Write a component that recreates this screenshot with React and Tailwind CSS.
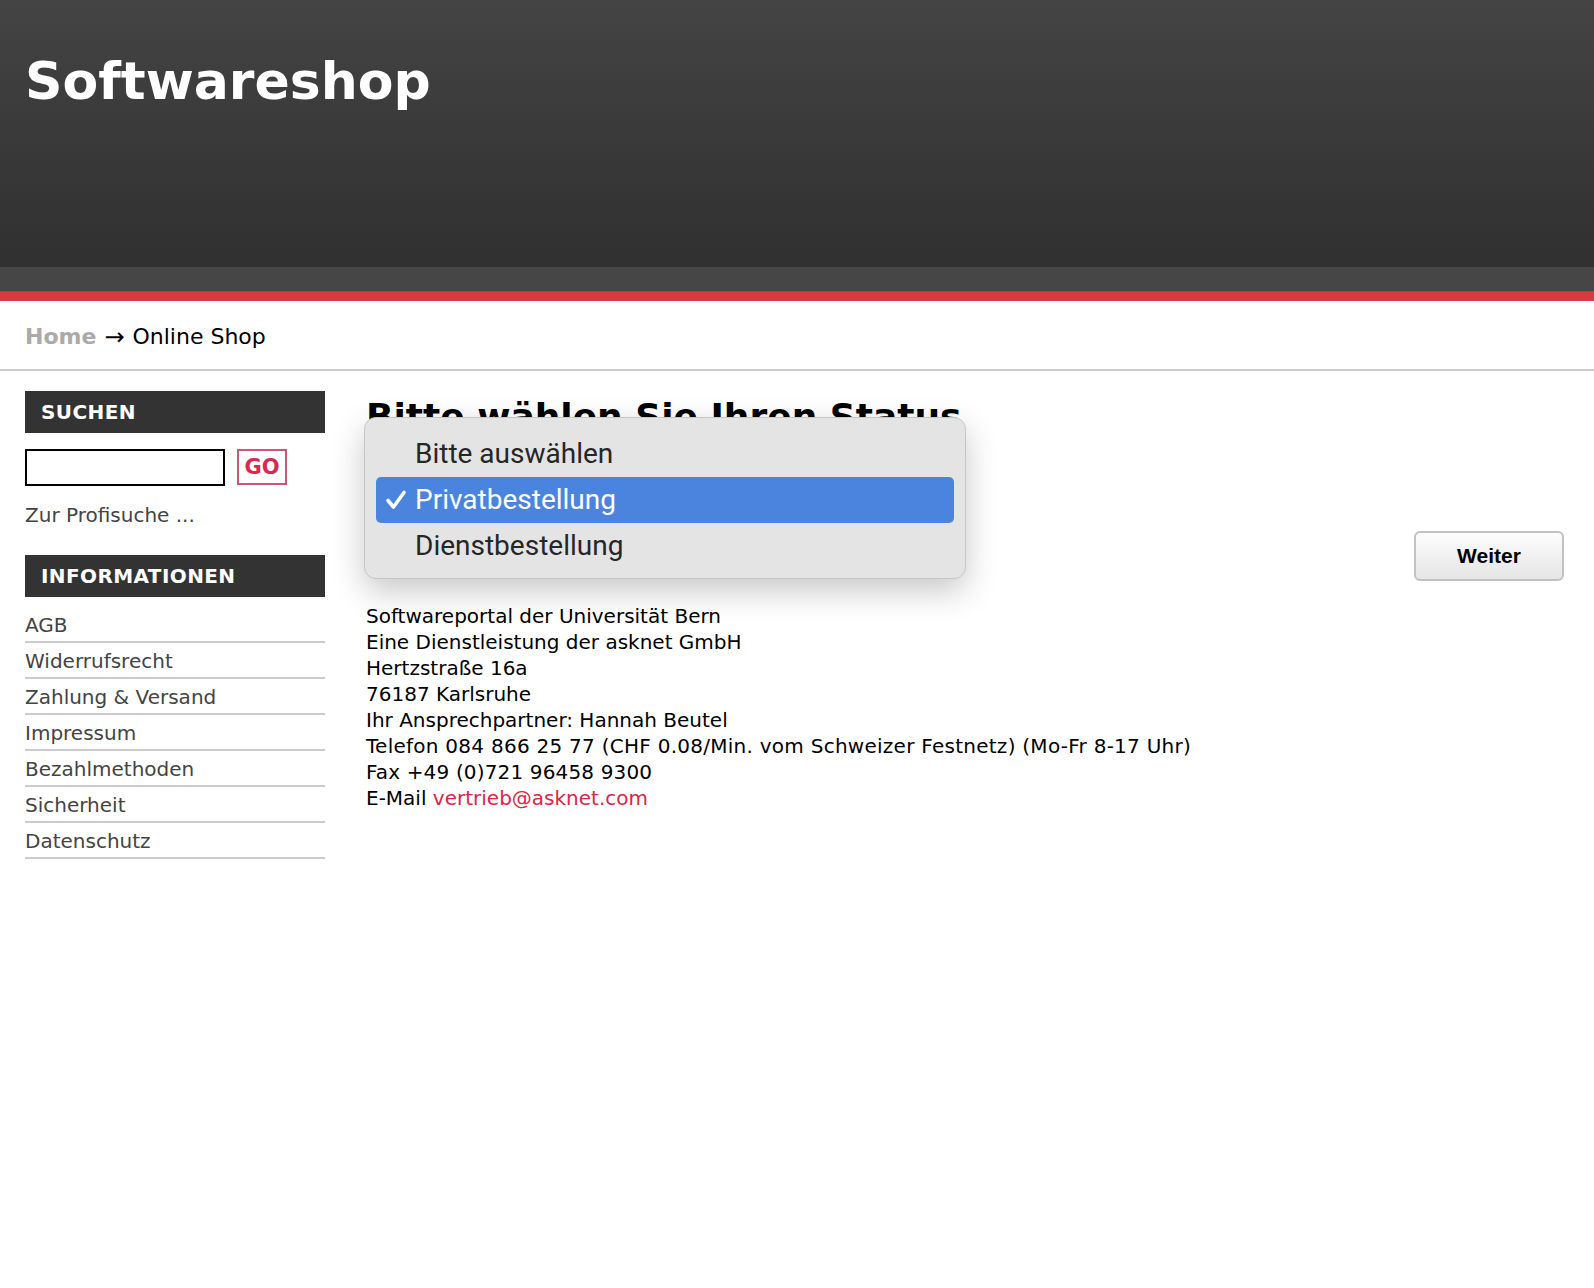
import React from "react";

const infoLinks = [
  "AGB",
  "Widerrufsrecht",
  "Zahlung & Versand",
  "Impressum",
  "Bezahlmethoden",
  "Sicherheit",
  "Datenschutz",
];

const addressLines = [
  "Softwareportal der Universität Bern",
  "Eine Dienstleistung der asknet GmbH",
  "Hertzstraße 16a",
  "76187 Karlsruhe",
  "Ihr Ansprechpartner: Hannah Beutel",
];

function SideHeader({ children }) {
  return (
    <div className="h-[42px] bg-[#333333] px-[16px] flex items-center text-white text-[20px] font-bold uppercase tracking-[0.4px]">
      {children}
    </div>
  );
}

// native-looking macOS popup of the status select
function StatusPopup() {
  const options = ["Bitte auswählen", "Privatbestellung", "Dienstbestellung"];
  return (
    <div className="absolute left-[-3px] top-[-62px] w-[602px] rounded-[12px] border border-[#c6c6c6] bg-[#e4e4e4] pt-[13px] pb-[9px] px-[11px] shadow-[0_12px_32px_rgba(0,0,0,0.22)] font-['Roboto','Liberation_Sans',sans-serif]">
      {options.map((o, i) => {
        const active = i === 1;
        return (
          <div
            key={o}
            className={
              active
                ? "h-[46px] rounded-[5px] bg-[#4a84de] text-white flex items-center"
                : "h-[46px] text-[#262626] flex items-center"
            }
          >
            <span className="w-[39px] flex justify-center pl-[1px]">
              {active && (
                <svg width="22" height="22" viewBox="0 0 22 22">
                  <path d="M3 11.5 L8.5 18 L19 3.5" fill="none" stroke="white" strokeWidth="3.6" strokeLinecap="round" strokeLinejoin="round" />
                </svg>
              )}
            </span>
            <span className="text-[28px] leading-none">{o}</span>
          </div>
        );
      })}
    </div>
  );
}

export default function App() {
  return (
    <div className="min-h-screen bg-white font-['DejaVu_Sans','Verdana',sans-serif] text-black">
      {/* header */}
      <div className="h-[267px] bg-gradient-to-b from-[#444444] to-[#303030] pl-[25px] pt-[55px]">
        <h1 className="text-[52px] leading-none font-bold text-white">Softwareshop</h1>
      </div>
      <div className="h-[24px] bg-[#464646]" />
      <div className="h-[10px] bg-[#db3941] border-t border-[#c23a40]" />

      {/* breadcrumb */}
      <div className="h-[70px] border-b-2 border-[#cccccc] px-[25px] pt-[3px] flex items-center text-[22px]">
        <span className="font-bold text-[#aaaaaa]">Home</span>
        <span className="ml-[8px] text-[24px] leading-none">→</span>
        <span className="ml-[8px]">Online Shop</span>
      </div>

      <div className="flex pt-[20px] pl-[25px] pr-[30px]">
        {/* sidebar */}
        <aside className="w-[300px] shrink-0 text-[20px]">
          <SideHeader>Suchen</SideHeader>
          <div className="mt-[16px] flex items-start gap-[12px]">
            <input className="w-[200px] h-[37px] border-2 border-black outline-none" />
            <button className="w-[50px] h-[36px] border-2 border-[#c65a72] text-[#d62a52] font-bold text-[21px] leading-none flex items-center justify-center">
              GO
            </button>
          </div>
          <div className="mt-[17px] leading-[24px] text-[#444444]">Zur Profisuche ...</div>
          <div className="mt-[28px]">
            <SideHeader>Informationen</SideHeader>
          </div>
          <ul className="mt-[10px]">
            {infoLinks.map((l) => (
              <li
                key={l}
                className="h-[36px] pt-[6px] leading-[24px] border-b-2 border-[#cccccc] text-[#444444]"
              >
                {l}
              </li>
            ))}
          </ul>
        </aside>

        {/* main content */}
        <main className="flex-1 ml-[41px] pt-[4px]">
          <h2 className="text-[36px] leading-[43px] font-bold">Bitte wählen Sie Ihren Status</h2>
          <div className="relative mt-[40px] w-[599px] h-[37px] rounded-[6px] border border-[#555555] bg-white">
            <StatusPopup />
          </div>
          <div className="mt-[16px] flex justify-end">
            <button className="w-[150px] h-[50px] rounded-[6px] border-2 border-[#c2c2c2] bg-gradient-to-b from-[#fdfdfd] to-[#e5e5e5] font-['Liberation_Sans',Arial,sans-serif] font-bold text-[21px]">
              Weiter
            </button>
          </div>
          <div className="mt-[22px] text-[20px] leading-[26px]">
            {addressLines.map((a) => (
              <div key={a}>{a}</div>
            ))}
            <div className="tracking-[0.26px]">
              Telefon 084 866 25 77 (CHF 0.08/Min. vom Schweizer Festnetz) (Mo-Fr 8-17 Uhr)
            </div>
            <div className="tracking-[0.15px]">Fax +49 (0)721 96458 9300</div>
            <div>
              E-Mail <a className="text-[#d9264a]">vertrieb@asknet.com</a>
            </div>
          </div>
        </main>
      </div>
    </div>
  );
}
